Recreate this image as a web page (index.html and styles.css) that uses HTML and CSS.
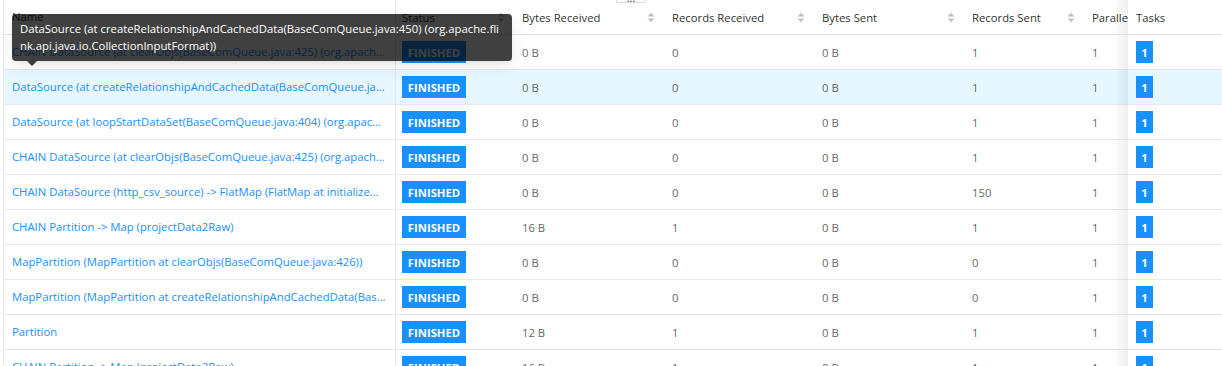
FILE: index.html
```html
<!DOCTYPE html>
<html lang="en">
<head>
<meta charset="utf-8">
<title>Vertices</title>
<link rel="stylesheet" href="styles.css">
</head>
<body>
<div class="more">...</div>
<div class="table">
  <div class="row head">
    <div class="cell name">Name</div>
    <div class="cell status sort"><span>Status</span><svg class="sorter" viewBox="0 0 8 11" width="8" height="11"><polygon points="0.5,4.5 4,0.8 7.5,4.5"/><polygon points="0.5,6.5 4,10.2 7.5,6.5"/></svg></div>
    <div class="cell sort"><span>Bytes Received</span><svg class="sorter" viewBox="0 0 8 11" width="8" height="11"><polygon points="0.5,4.5 4,0.8 7.5,4.5"/><polygon points="0.5,6.5 4,10.2 7.5,6.5"/></svg></div>
    <div class="cell sort"><span>Records Received</span><svg class="sorter" viewBox="0 0 8 11" width="8" height="11"><polygon points="0.5,4.5 4,0.8 7.5,4.5"/><polygon points="0.5,6.5 4,10.2 7.5,6.5"/></svg></div>
    <div class="cell sort"><span>Bytes Sent</span><svg class="sorter" viewBox="0 0 8 11" width="8" height="11"><polygon points="0.5,4.5 4,0.8 7.5,4.5"/><polygon points="0.5,6.5 4,10.2 7.5,6.5"/></svg></div>
    <div class="cell sort"><span>Records Sent</span><svg class="sorter" viewBox="0 0 8 11" width="8" height="11"><polygon points="0.5,4.5 4,0.8 7.5,4.5"/><polygon points="0.5,6.5 4,10.2 7.5,6.5"/></svg></div>
    <div class="cell par">Parallelism</div>
    <div class="cell tasks">Tasks</div>
  </div>

  <div class="row">
    <div class="cell name link">CHAIN DataSource (at clearObjs(BaseComQueue.java:425) (org.apach...</div>
    <div class="cell status"><span class="badge">FINISHED</span></div>
    <div class="cell num">0 B</div><div class="cell num">0</div><div class="cell num">0 B</div><div class="cell num">1</div><div class="cell par num">1</div>
    <div class="cell tasks"><span class="task">1</span></div>
  </div>
  <div class="row active">
    <div class="cell name link">DataSource (at createRelationshipAndCachedData(BaseComQueue.ja...</div>
    <div class="cell status"><span class="badge">FINISHED</span></div>
    <div class="cell num">0 B</div><div class="cell num">0</div><div class="cell num">0 B</div><div class="cell num">1</div><div class="cell par num">1</div>
    <div class="cell tasks"><span class="task">1</span></div>
  </div>
  <div class="row">
    <div class="cell name link">DataSource (at loopStartDataSet(BaseComQueue.java:404) (org.apach...</div>
    <div class="cell status"><span class="badge">FINISHED</span></div>
    <div class="cell num">0 B</div><div class="cell num">0</div><div class="cell num">0 B</div><div class="cell num">1</div><div class="cell par num">1</div>
    <div class="cell tasks"><span class="task">1</span></div>
  </div>
  <div class="row">
    <div class="cell name link">CHAIN DataSource (at clearObjs(BaseComQueue.java:425) (org.apach...</div>
    <div class="cell status"><span class="badge">FINISHED</span></div>
    <div class="cell num">0 B</div><div class="cell num">0</div><div class="cell num">0 B</div><div class="cell num">1</div><div class="cell par num">1</div>
    <div class="cell tasks"><span class="task">1</span></div>
  </div>
  <div class="row">
    <div class="cell name link">CHAIN DataSource (http_csv_source) -&gt; FlatMap (FlatMap at initialize...</div>
    <div class="cell status"><span class="badge">FINISHED</span></div>
    <div class="cell num">0 B</div><div class="cell num">0</div><div class="cell num">0 B</div><div class="cell num">150</div><div class="cell par num">1</div>
    <div class="cell tasks"><span class="task">1</span></div>
  </div>
  <div class="row">
    <div class="cell name link">CHAIN Partition -&gt; Map (projectData2Raw)</div>
    <div class="cell status"><span class="badge">FINISHED</span></div>
    <div class="cell num">16 B</div><div class="cell num">1</div><div class="cell num">0 B</div><div class="cell num">1</div><div class="cell par num">1</div>
    <div class="cell tasks"><span class="task">1</span></div>
  </div>
  <div class="row">
    <div class="cell name link">MapPartition (MapPartition at clearObjs(BaseComQueue.java:426))</div>
    <div class="cell status"><span class="badge">FINISHED</span></div>
    <div class="cell num">0 B</div><div class="cell num">0</div><div class="cell num">0 B</div><div class="cell num">0</div><div class="cell par num">1</div>
    <div class="cell tasks"><span class="task">1</span></div>
  </div>
  <div class="row">
    <div class="cell name link">MapPartition (MapPartition at createRelationshipAndCachedData(Bas...</div>
    <div class="cell status"><span class="badge">FINISHED</span></div>
    <div class="cell num">0 B</div><div class="cell num">0</div><div class="cell num">0 B</div><div class="cell num">0</div><div class="cell par num">1</div>
    <div class="cell tasks"><span class="task">1</span></div>
  </div>
  <div class="row">
    <div class="cell name link">Partition</div>
    <div class="cell status"><span class="badge">FINISHED</span></div>
    <div class="cell num">12 B</div><div class="cell num">1</div><div class="cell num">0 B</div><div class="cell num">1</div><div class="cell par num">1</div>
    <div class="cell tasks"><span class="task">1</span></div>
  </div>
  <div class="row">
    <div class="cell name link">CHAIN Partition -&gt; Map (projectData2Raw)</div>
    <div class="cell status"><span class="badge">FINISHED</span></div>
    <div class="cell num">16 B</div><div class="cell num">1</div><div class="cell num">0 B</div><div class="cell num">1</div><div class="cell par num">1</div>
    <div class="cell tasks"><span class="task">1</span></div>
  </div>
</div>

<div class="tooltip">
  <span class="tip-line">DataSource (at createRelationshipAndCachedData(BaseComQueue.java:450) (org.apache.fli</span>
  <span class="tip-line">nk.api.java.io.CollectionInputFormat))</span>
</div>
</body>
</html>
```

FILE: styles.css
```css
html, body {
  margin: 0;
  padding: 0;
  background: #fff;
}

body {
  position: relative;
  height: 366px;
  overflow: hidden;
  font-family: "Open Sans", "Noto Sans", sans-serif;
  font-size: 11.3px;
  color: rgba(0, 0, 0, 0.65);
}

.table {
  margin-left: 3px;
  border-left: 1px solid #e8e8e8;
  height: 366px;
  overflow: hidden;
}

.row {
  display: grid;
  grid-template-columns: 392px 118px 150px 150px 150px 120px 44px 94px;
  height: 35px;
  box-sizing: border-box;
  border-bottom: 1px solid #e8e8e8;
}

.row.active {
  background: #e6f7ff;
}

.cell {
  display: flex;
  align-items: center;
  padding: 0 8px;
  white-space: nowrap;
  overflow: hidden;
  min-width: 0;
  box-sizing: border-box;
}

.cell.name {
  border-right: 1px solid #e8e8e8;
  text-overflow: ellipsis;
  display: block;
  line-height: 34px;
}

.cell.status {
  padding-left: 6px;
}

.head .cell {
  color: rgba(0, 0, 0, 0.85);
}

.head .cell.name {
  line-height: 34px;
}

.cell.sort {
  justify-content: space-between;
  padding-right: 9px;
}

.sorter {
  flex: none;
  fill: #bfbfbf;
}

.cell.par {
  overflow: hidden;
  padding-right: 0;
}

.cell.tasks {
  position: relative;
  overflow: visible;
}

.cell.tasks::before {
  content: "";
  position: absolute;
  left: -14px;
  top: 0;
  bottom: -1px;
  width: 14px;
  background: linear-gradient(to left, rgba(0, 0, 0, 0.07), rgba(0, 0, 0, 0));
  pointer-events: none;
}

.link {
  color: #1890ff;
}

.badge {
  display: inline-flex;
  align-items: center;
  justify-content: center;
  width: 64px;
  height: 22px;
  background: #1890ff;
  color: #fff;
  font-weight: 700;
}

.task {
  display: inline-flex;
  align-items: center;
  justify-content: center;
  width: 17px;
  height: 22px;
  background: #1890ff;
  color: #fff;
  font-weight: 700;
}

.more {
  position: absolute;
  left: 616px;
  top: -14px;
  width: 30px;
  height: 17px;
  box-sizing: border-box;
  border: 1px solid #d9d9d9;
  border-radius: 2px;
  background: #fff;
  color: rgba(0, 0, 0, 0.85);
  text-align: center;
  line-height: 22px;
  font-size: 11px;
  z-index: 2;
}

.tooltip {
  position: absolute;
  left: 12px;
  top: 14px;
  width: 500px;
  box-sizing: border-box;
  padding: 6px 8px 7px;
  background: rgba(0, 0, 0, 0.75);
  border-radius: 4px;
  color: #fff;
  line-height: 17px;
  z-index: 5;
  box-shadow: 0 3px 6px -4px rgba(0, 0, 0, 0.12), 0 6px 16px rgba(0, 0, 0, 0.08);
}

.tooltip::after {
  content: "";
  position: absolute;
  left: 15px;
  bottom: -5px;
  border-left: 5px solid transparent;
  border-right: 5px solid transparent;
  border-top: 5px solid rgba(0, 0, 0, 0.75);
}

.tip-line {
  display: block;
  white-space: nowrap;
  overflow: hidden;
}
```
